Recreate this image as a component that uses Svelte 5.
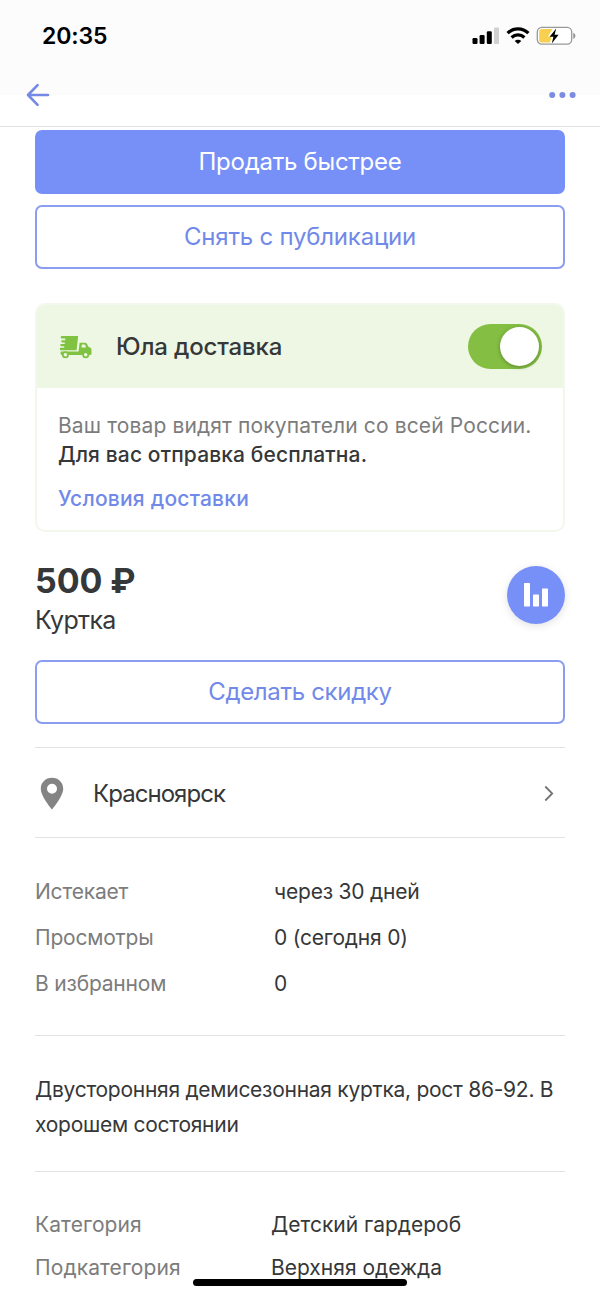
<script>
  let delivery = $state(true);

  const stats = [
    { label: "Истекает", value: "через 30 дней" },
    { label: "Просмотры", value: "0 (сегодня 0)" },
    { label: "В избранном", value: "0" },
  ];

  const details = [
    { label: "Категория", value: "Детский гардероб" },
    { label: "Подкатегория", value: "Верхняя одежда" },
  ];
</script>

<div class="screen">
  <header>
    <div class="status">
      <span class="time">20:35</span>
      <div class="indicators">
        <!-- Signal -->
        <svg width="28" height="18" viewBox="0 0 28 18">
          <rect x="0.5" y="11" width="5" height="6" rx="1.2" />
          <rect x="7.6" y="8" width="5" height="9" rx="1.2" />
          <rect x="14.8" y="4.3" width="5" height="12.7" rx="1.2" />
          <rect x="22" y="0.5" width="5" height="16.5" rx="1.2" fill="#d0d0d0" />
        </svg>
        <!-- Wi-Fi -->
        <svg class="wifi" width="24" height="18" viewBox="0 0 24 18" fill="none" stroke="#000">
          <path d="M1.6 6.2C7.4 0.4 16.6 0.4 22.4 6.2" stroke-width="3.2" />
          <path d="M5.6 10.5C9.2 7 14.8 7 18.4 10.5" stroke-width="3.2" />
          <path d="M12 17L8.7 13.9C10.6 12.3 13.4 12.3 15.3 13.9Z" fill="#000" stroke="none" />
        </svg>
        <!-- Battery -->
        <svg class="battery" width="40" height="20" viewBox="0 0 40 20">
          <rect x="1.3" y="1.3" width="34.4" height="16.9" rx="4.6" fill="#fff" stroke="#999" stroke-width="1.3" />
          <path d="M5.7 3.1H16.5L12 10.5H15.5L14 16.4H5.7Q3.2 16.4 3.2 13.9V5.6Q3.2 3.1 5.7 3.1Z" fill="#f8cf4e" />
          <path d="M37.2 6.7Q39.5 7.6 39.5 9.8T37.2 12.9Z" fill="#999" />
          <path d="M20.2 2.6L13.6 10.7H17.4L15.8 17.4L22.6 8.8H18.6Z" fill="#000" />
        </svg>
      </div>
    </div>
    <nav>
      <button class="icon-btn" aria-label="Назад">
        <svg width="24" height="24" viewBox="0 0 24 24" fill="none" stroke="#7489e6" stroke-width="2.6" stroke-linecap="round" stroke-linejoin="round">
          <path d="M22 12H2M11.6 2.2L2 12L11.6 21.8" />
        </svg>
      </button>
      <button class="icon-btn" aria-label="Ещё">
        <svg width="28" height="8" viewBox="0 0 28 8" fill="#7a8de2">
          <circle cx="4.2" cy="4" r="3" />
          <circle cx="14.4" cy="4" r="3" />
          <circle cx="24.6" cy="4" r="3" />
        </svg>
      </button>
    </nav>
  </header>

  <main>
    <button class="btn primary">Продать быстрее</button>
    <button class="btn unpublish">Снять с публикации</button>

    <!-- Delivery -->
    <section class="delivery">
      <div class="delivery-head">
        <svg width="34" height="24" viewBox="0 0 34 24" fill="#80c342">
          <path d="M2.8 1H19.2L17.6 15.2H1.9Q0.8 15 0.8 13.9T1.9 12.8H5.2V11.2H2.2Q1.3 10.9 1.3 10T2.2 9H5.8V7.4H3Q2.2 7.1 2.2 6.2T3 5.3H6.2V3.5H2.8Q1.7 3.3 1.7 2.2T2.8 1Z" />
          <path d="M19.5 16.6L20.6 7.8H26Q27.4 7.8 28.2 9.2L29.5 12Q32.5 12.4 32.5 14.8V19Q32.3 20 31.1 20H3Q1.6 20 1.6 18.4V16.6Z" />
          <path d="M22.9 9.6H25.3Q26.5 9.7 27 12.4H22.5Z" fill="#eef7e4" />
          <circle cx="6.4" cy="19.8" r="3.5" />
          <circle cx="6.4" cy="19.8" r="1.7" fill="#eef7e4" />
          <circle cx="26.7" cy="19.8" r="3.5" />
          <circle cx="26.7" cy="19.8" r="1.7" fill="#eef7e4" />
        </svg>
        <span class="delivery-title">Юла доставка</span>
        <button
          class="toggle"
          class:on={delivery}
          role="switch"
          aria-checked={delivery}
          aria-label="Юла доставка"
          onclick={() => (delivery = !delivery)}
        >
          <span class="knob"></span>
        </button>
      </div>
      <div class="delivery-body">
        <p class="muted">Ваш товар видят покупатели со всей России.</p>
        <p class="free">Для вас отправка бесплатна.</p>
        <a href="#terms">Условия доставки</a>
      </div>
    </section>

    <!-- Price -->
    <section class="summary">
      <div>
        <h1>500 ₽</h1>
        <h2>Куртка</h2>
      </div>
      <button class="chart" aria-label="Статистика">
        <svg width="24" height="24" viewBox="0 0 24 24" fill="#fff">
          <rect x="0" y="0" width="6" height="23.4" rx="0.6" />
          <rect x="9" y="11.6" width="6" height="11.8" rx="0.6" />
          <rect x="18" y="5.6" width="6" height="17.8" rx="0.6" />
        </svg>
      </button>
    </section>

    <button class="btn discount">Сделать скидку</button>

    <!-- Location -->
    <section class="location">
      <svg width="24" height="33" viewBox="0 0 24 33">
        <path d="M12 0.8C5.6 0.8 0.8 5.5 0.8 11.7C0.8 19.6 12 32.4 12 32.4S23.2 19.6 23.2 11.7C23.2 5.5 18.4 0.8 12 0.8ZM12 6.7A5 5 0 1 1 12 16.7A5 5 0 0 1 12 6.7Z" fill="#848484" fill-rule="evenodd" />
      </svg>
      <span class="city">Красноярск</span>
      <svg width="10" height="17" viewBox="0 0 10 17" fill="none" stroke="#747474" stroke-width="1.8">
        <path d="M1.3 1.5L8.2 8.5L1.3 15.5" />
      </svg>
    </section>

    <dl class="stats">
      {#each stats as row}
        <div class="row">
          <dt>{row.label}</dt>
          <dd>{row.value}</dd>
        </div>
      {/each}
    </dl>

    <p class="description">Двусторонняя демисезонная куртка, рост 86-92. В хорошем состоянии</p>

    <dl class="details">
      {#each details as row}
        <div class="row">
          <dt>{row.label}</dt>
          <dd>{row.value}</dd>
        </div>
      {/each}
    </dl>
  </main>

  <div class="home-indicator"></div>
</div>

<style>
  :global(body) {
    background: #fff;
  }

  .screen {
    position: relative;
    width: 600px;
    height: 1297px;
    overflow: hidden;
    background: #fff;
    color: #363738;
    font-family: Inter, "Liberation Sans", sans-serif;
  }

  * {
    box-sizing: border-box;
  }

  button {
    padding: 0;
    border: 0;
    background: none;
    font-family: inherit;
    cursor: pointer;
  }

  svg {
    display: block;
    flex: none;
  }

  p,
  h1,
  h2,
  dl,
  dd {
    margin: 0;
  }

  header {
    height: 127px;
    border-bottom: 1px solid #e2e2e2;
    background: linear-gradient(#fcfcfc 95px, #fff 95px);
  }

  .status {
    display: flex;
    align-items: center;
    justify-content: space-between;
    height: 72px;
    padding: 0 24px 0 42px;
  }

  .time {
    color: #000;
    font-size: 23px;
    font-weight: 600;
    letter-spacing: -0.1px;
  }

  .indicators {
    display: flex;
    align-items: center;
  }

  .wifi {
    margin-left: 6px;
  }

  .battery {
    margin-left: 6px;
  }

  nav {
    display: flex;
    align-items: center;
    justify-content: space-between;
    height: 46px;
    padding: 0 24px 0 26px;
  }

  main {
    padding: 3px 35px 0;
  }

  .btn {
    display: block;
    width: 100%;
    height: 64px;
    border: 2px solid #8b9def;
    border-radius: 7px;
    background: #fff;
    color: #7189e8;
    font-size: 24px;
    letter-spacing: -0.27px;
    line-height: 1;
  }

  .primary {
    border-color: #7790f7;
    background: #7790f7;
    color: #fff;
  }

  .unpublish {
    margin-top: 11px;
    letter-spacing: -0.22px;
  }

  .discount {
    letter-spacing: -0.33px;
  }

  .delivery {
    height: 229px;
    margin-top: 34px;
    border: 2px solid #f3f8ee;
    border-radius: 10px;
    overflow: hidden;
  }

  .delivery-head {
    display: flex;
    align-items: center;
    height: 83px;
    padding: 0 21px 0 22px;
    background: #eef7e4;
  }

  .delivery-title {
    flex: 1;
    margin-left: 23px;
    font-size: 24px;
    font-weight: 500;
    letter-spacing: -0.15px;
  }

  .toggle {
    display: flex;
    align-items: center;
    width: 74px;
    height: 45px;
    padding: 0 3px;
    border-radius: 23px;
    background: #ccc;
  }

  .toggle.on {
    justify-content: flex-end;
    background: #84bf43;
  }

  .knob {
    width: 39px;
    height: 39px;
    border-radius: 50%;
    background: #fff;
    box-shadow: 0 1px 4px rgba(0, 0, 0, 0.3);
  }

  .delivery-body {
    padding: 23px 21px;
    font-size: 21px;
    letter-spacing: 0.13px;
    line-height: 29px;
  }

  .muted {
    color: #7c7c7c;
    white-space: nowrap;
  }

  .free {
    font-weight: 500;
  }

  .delivery-body a {
    display: block;
    margin-top: 15px;
    color: #7189e8;
    font-weight: 500;
    letter-spacing: 0.23px;
    text-decoration: none;
  }

  .summary {
    display: flex;
    justify-content: space-between;
    height: 128px;
    padding-top: 29px;
  }

  h1 {
    font-size: 34px;
    font-weight: 700;
    letter-spacing: -0.1px;
    line-height: 40px;
  }

  h2 {
    font-size: 25px;
    font-weight: 400;
    letter-spacing: -0.7px;
    line-height: 38px;
  }

  .chart {
    display: flex;
    align-items: center;
    justify-content: center;
    width: 58px;
    height: 58px;
    margin-top: 5px;
    border-radius: 50%;
    background: #7790f7;
    box-shadow: 0 2px 8px rgba(0, 0, 0, 0.12);
  }

  .location {
    display: flex;
    align-items: center;
    height: 91px;
    margin-top: 23px;
    padding: 1px 11px 0 5px;
    border-top: 1px solid #e3e3e3;
    border-bottom: 1px solid #e3e3e3;
  }

  .city {
    flex: 1;
    margin-left: 29px;
    font-size: 24px;
    letter-spacing: -0.95px;
  }

  .row {
    display: flex;
    font-size: 21px;
  }

  dt {
    width: 239px;
    color: #7c7c7c;
  }

  .stats {
    height: 198px;
    padding-top: 31px;
    border-bottom: 1px solid #e3e3e3;
    letter-spacing: -0.2px;
  }

  .stats .row {
    line-height: 46px;
  }

  .description {
    height: 136px;
    padding-top: 36px;
    border-bottom: 1px solid #e3e3e3;
    font-size: 21px;
    letter-spacing: -0.27px;
    line-height: 35px;
  }

  .details {
    padding-top: 31px;
  }

  .details .row {
    line-height: 43px;
  }

  .details dt {
    width: 236px;
    letter-spacing: 0.1px;
  }

  .home-indicator {
    position: absolute;
    bottom: 11px;
    left: 193px;
    width: 214px;
    height: 7px;
    border-radius: 4px;
    background: #000;
  }
</style>
